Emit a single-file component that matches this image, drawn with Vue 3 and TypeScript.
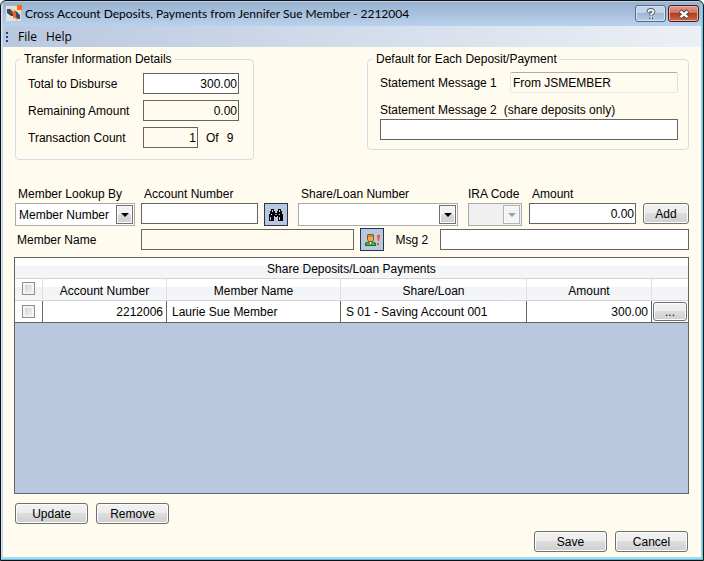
<script setup lang="ts">
import { ref } from 'vue'

interface Deposit {
  account: string
  member: string
  share: string
  amount: string
  selected: boolean
}

const title = 'Cross Account Deposits, Payments from Jennifer Sue Member - 2212004'
const total = ref('300.00')
const remaining = ref('0.00')
const count = ref('1')
const message1 = ref('From JSMEMBER')
const message2 = ref('')
const lookupBy = ref('Member Number')
const accountNumber = ref('')
const shareLoan = ref('')
const iraCode = ref('')
const amount = ref('0.00')
const memberName = ref('')
const msg2 = ref('')
const allSelected = ref(false)
const deposits = ref<Deposit[]>([
  {
    account: '2212006',
    member: 'Laurie Sue Member',
    share: 'S 01 - Saving Account 001',
    amount: '300.00',
    selected: false,
  },
])

function toggleAll() {
  deposits.value.forEach((d) => (d.selected = allSelected.value))
}
</script>

<template>
  <div class="window">
    <header class="titlebar">
      <svg class="app-icon" viewBox="0 0 16 16" aria-hidden="true">
        <rect y="1" width="15" height="15" fill="#e4e2e0" />
        <path d="M1 4h3l3 3v4H5L1 8z" fill="#3f4a56" />
        <path d="M8 6h2l4 4v4h-2L8 11z" fill="#3f4a56" />
        <path d="M4 3l4 4V4l2 4v4l2 4-4-4-1 2V9z" fill="#f0661e" />
        <rect x="11" y="0" width="5" height="5" fill="#ff6a13" />
      </svg>
      <h1>{{ title }}</h1>
      <button type="button" class="caption-btn" aria-label="Context help">
        <svg viewBox="0 0 12 12" width="12" height="12">
          <path d="M3.5 4.5V3.2Q3.8 1.8 6 1.8T8.5 3.8Q8.5 5 6.2 6.2V7.6M6.2 9v2" fill="none" stroke="#4b5665" stroke-width="3.6" />
          <path d="M3.5 4V3.2Q3.8 1.8 6 1.8T8.5 3.8Q8.5 5 6.2 6.2V7.3M6.2 9v1.600" fill="none" stroke="#fff" stroke-width="1.8" />
        </svg>
      </button>
      <button type="button" class="caption-btn close" aria-label="Close">
        <svg viewBox="0 0 12 12" width="12" height="12">
          <path d="M2 3l8 6.500M10 3l-8 6.500" stroke="#53464f" stroke-width="4.400" />
          <path d="M2.500 3.400l7 5.700M9.500 3.400l-7 5.700" stroke="#fff" stroke-width="2.400" />
        </svg>
      </button>
    </header>

    <nav class="menubar">
      <span class="grip"><i></i><i></i><i></i></span>
      <button type="button">File</button>
      <button type="button">Help</button>
    </nav>

    <main class="client">
      <section class="groups">
        <fieldset class="details">
          <legend>Transfer Information Details</legend>
          <div class="detail-row">
            <label for="total">Total to Disburse</label>
            <input id="total" v-model="total" class="box num" />
          </div>
          <div class="detail-row">
            <label for="remaining">Remaining Amount</label>
            <input id="remaining" v-model="remaining" class="box num locked" readonly />
          </div>
          <div class="detail-row">
            <label for="count">Transaction Count</label>
            <input id="count" v-model="count" class="box num locked short" readonly />
            <span class="limit">Of</span><span class="limit">9</span>
          </div>
        </fieldset>

        <fieldset class="defaults">
          <legend>Default for Each Deposit/Payment</legend>
          <div class="message-row">
            <label for="message1">Statement Message 1</label>
            <input id="message1" v-model="message1" class="box soft" readonly />
          </div>
          <label class="message-label" for="message2">
            <span>Statement Message 2</span><span>(share deposits only)</span>
          </label>
          <input id="message2" v-model="message2" class="box" />
        </fieldset>
      </section>

      <section class="lookup">
        <div class="cluster">
          <div class="field w-lookup">
            <label for="lookup">Member Lookup By</label>
            <div class="combo">
              <select id="lookup" v-model="lookupBy">
                <option>Member Number</option>
              </select>
              <span class="drop"></span>
            </div>
          </div>
          <div class="field w-account">
            <label for="account">Account Number</label>
            <input id="account" v-model="accountNumber" class="box" />
          </div>
          <button type="button" class="icon-btn" aria-label="Find account">
            <svg viewBox="0 0 16 14" width="16" height="14">
              <path d="M3 1h3v2h1v2h2V3h1V1h3v2h1v3h1v7h-5V8H9v1H7V8H6v5H1V6h1V3h1z" fill="#050505" />
              <path d="M4 2h1v2H4zM11 2h1v2h-1zM3 6h1v1H3zM11 6h1v1h-1zM2 9h1v3H2zM11 9h1v3h-1z" fill="#c9ced4" />
              <path d="M7 6h2v1H7z" fill="#8b9095" />
            </svg>
          </button>
        </div>

        <div class="field grow">
          <label for="share">Share/Loan Number</label>
          <div class="combo">
            <select id="share" v-model="shareLoan"><option value=""></option></select>
            <span class="drop"></span>
          </div>
        </div>

        <div class="cluster wide">
          <div class="field w-ira">
            <label for="ira" class="flush">IRA Code</label>
            <div class="combo disabled">
              <select id="ira" v-model="iraCode" disabled><option value=""></option></select>
              <span class="drop"></span>
            </div>
          </div>
          <div class="field w-amount">
            <label for="amount">Amount</label>
            <input id="amount" v-model="amount" class="box num" />
          </div>
          <button type="button" class="btn add">Add</button>
        </div>
      </section>

      <section class="member">
        <label for="member" class="member-label">Member Name</label>
        <input id="member" v-model="memberName" class="box locked member-box" readonly />
        <button type="button" class="icon-btn" aria-label="Member alerts">
          <svg viewBox="0 0 16 14" width="16" height="14">
            <path d="M1 13v-3l2-1 2-1h3l2 1 2 1v3z" fill="#1f6b2c" />
            <path d="M2 12v-1l2-2 2 2h1l2-2 2 2v1z" fill="#4fae45" />
            <path d="M5 8h3l-1 3H6z" fill="#f6e3bd" />
            <path d="M3 2l1-1h5l1 1v5L8 9H5L3 7z" fill="#8a5a1c" />
            <path d="M4 4h5v3L8 8H5L4 7z" fill="#f0a952" />
            <path d="M4 2h5v2H4z" fill="#c98a2e" />
            <path d="M13 2h3l-1 6h-1zM13 10h2v2h-2z" fill="#ff4a0b" />
          </svg>
        </button>
        <label for="msg2" class="msg-label">Msg 2</label>
        <input id="msg2" v-model="msg2" class="box msg-box" />
      </section>

      <section class="grid">
        <table>
          <colgroup>
            <col class="c-check" /><col class="c-account" /><col class="c-member" />
            <col /><col class="c-amount" /><col class="c-more" />
          </colgroup>
          <thead>
            <tr class="band"><th colspan="6">Share Deposits/Loan Payments</th></tr>
            <tr class="heads">
              <th class="check">
                <input v-model="allSelected" type="checkbox" aria-label="Select all" @change="toggleAll" />
              </th>
              <th>Account Number</th>
              <th>Member Name</th>
              <th>Share/Loan</th>
              <th>Amount</th>
              <th></th>
            </tr>
          </thead>
          <tbody>
            <tr v-for="d in deposits" :key="d.account">
              <td class="check"><input v-model="d.selected" type="checkbox" aria-label="Select row" /></td>
              <td class="right">{{ d.account }}</td>
              <td>{{ d.member }}</td>
              <td>{{ d.share }}</td>
              <td class="right">{{ d.amount }}</td>
              <td class="more"><button type="button" class="btn">...</button></td>
            </tr>
          </tbody>
        </table>
      </section>

      <footer>
        <div class="actions">
          <button type="button" class="btn">Update</button>
          <button type="button" class="btn">Remove</button>
        </div>
        <div class="actions end">
          <button type="button" class="btn">Save</button>
          <button type="button" class="btn">Cancel</button>
        </div>
      </footer>
    </main>
  </div>
</template>

<style>
body {
  background: #fff;
}
</style>

<style scoped>
* {
  box-sizing: border-box;
}
.window {
  display: flex;
  flex-direction: column;
  min-height: 100vh;
  padding: 1px 2px 3px;
  border: 1px solid #111;
  border-radius: 6px 6px 0 0;
  background: linear-gradient(90deg, #dceafa, #b9d1ea 2px, #b9d1ea calc(100% - 2px), #35cdea);
  box-shadow: inset 0 -1px #35cdea;
  font: 12px/14px 'Liberation Sans', Arial, sans-serif;
  color: #000;
}
button,
input,
select {
  font: inherit;
  color: inherit;
  margin: 0;
}
.titlebar {
  display: flex;
  align-items: flex-start;
  height: 24px;
  padding: 3px 2px 0 3px;
  background: linear-gradient(#98b1cf, #b9d1ec);
}
.app-icon {
  width: 16px;
  height: 16px;
  flex: none;
}
h1 {
  flex: 1;
  margin: 0 0 0 3px;
  font: 12px/18px Lato, 'Open Sans', sans-serif;
  white-space: nowrap;
}
.caption-btn {
  display: flex;
  align-items: center;
  justify-content: center;
  width: 31px;
  height: 17px;
  margin-left: 2px;
  padding: 0;
  border: 1px solid #56697f;
  border-radius: 3px;
  background: linear-gradient(#c3d4e8 50%, #9fb7d2 50%, #b9d0e9);
  box-shadow: inset 0 0 0 1px #d6e4f3;
}
.caption-btn.close {
  border-color: #4a1c22;
  background: linear-gradient(#e09c8c, #d0705b 50%, #b93a22 50%, #cf6b48);
  box-shadow: inset 0 0 0 1px #e8aea2;
}
.menubar {
  display: flex;
  align-items: center;
  height: 21px;
  padding-left: 3px;
  background: linear-gradient(90deg, #b8c8df, #ecf0f6);
  font: 12px/20px 'Open Sans', 'Noto Sans', sans-serif;
}
.menubar button {
  margin-right: 9px;
  padding: 0;
  border: 0;
  background: none;
}
.grip {
  display: flex;
  flex-direction: column;
  gap: 2px;
  margin-right: 10px;
}
.grip i {
  width: 2px;
  height: 2px;
  background: #27416b;
}
.client {
  flex: 1;
  display: flex;
  flex-direction: column;
  padding: 5px 12px 5px 11px;
  background: #fffbef;
}
.groups {
  display: flex;
  align-items: flex-start;
  justify-content: space-between;
  padding-left: 1px;
}
fieldset {
  margin: 0;
  border: 1px solid #d3dde6;
  border-radius: 4px;
}
legend {
  margin-left: -7px;
  padding: 0 3px;
}
.details {
  width: 239px;
  height: 108px;
  padding: 7px 0 0 12px;
}
.detail-row {
  display: flex;
  align-items: center;
  height: 21px;
  margin-bottom: 6px;
}
.detail-row label {
  width: 115px;
}
.detail-row .box {
  width: 96px;
}
.detail-row .short {
  width: 55px;
}
.limit {
  margin-left: 8px;
}
.defaults {
  width: 322px;
  height: 98px;
  padding: 6px 10px 0 12px;
}
.message-row {
  display: flex;
  align-items: center;
  margin-bottom: 10px;
}
.message-row label {
  width: 130px;
  flex: none;
}
.message-label {
  display: flex;
  gap: 7px;
  margin-bottom: 2px;
}
.box {
  display: block;
  width: 100%;
  min-width: 0;
  height: 21px;
  padding: 0 2px;
  border: 1px solid #646464;
  border-radius: 0;
  background: #fff;
  outline-offset: -1px;
}
.num {
  padding: 0 1px;
  text-align: right;
}
.locked {
  background: #fffbef;
}
.soft {
  border-color: #abadb3 #dbdfe6 #e3e9ef #e2e3ea;
  border-radius: 2px;
  background: #fffbef;
}
.lookup {
  display: flex;
  align-items: flex-start;
  gap: 10px;
  margin-top: 27px;
  padding-left: 1px;
}
.cluster {
  display: flex;
  gap: 6px;
}
.wide {
  gap: 7px;
}
.field label {
  display: block;
  height: 16px;
  padding-left: 3px;
  white-space: nowrap;
}
.field .flush {
  padding-left: 0;
}
.w-lookup {
  width: 120px;
}
.w-account {
  width: 117px;
}
.w-ira {
  width: 54px;
}
.w-amount {
  width: 107px;
}
.grow {
  flex: 1;
}
.combo {
  display: grid;
  height: 23px;
  border: 1px solid #ababab;
  background: #fff;
}
.combo select,
.drop {
  grid-area: 1 / 1;
}
.combo select {
  width: 100%;
  padding: 0 20px 0 3px;
  border: 0;
  border-radius: 0;
  background: none;
  appearance: none;
}
.drop {
  display: flex;
  align-items: center;
  justify-content: center;
  justify-self: end;
  width: 17px;
  margin: 1px;
  border: 1px solid #707070;
  background: linear-gradient(#f2f2f2 45%, #d8d8d8 55%, #cfcfcf);
  box-shadow: inset 0 0 0 1px #fafafa;
  pointer-events: none;
}
.drop::after {
  content: '';
  border: 4px solid transparent;
  border-top-color: #000;
  border-bottom: 0;
}
.disabled {
  background: #f0f0f0;
}
.disabled .drop {
  border-color: #adb2b5;
  background: #f4f4f4;
}
.disabled .drop::after {
  border-top-color: #a0a0a0;
}
.icon-btn {
  display: flex;
  align-items: center;
  justify-content: center;
  flex: none;
  width: 24px;
  height: 23px;
  padding: 0;
  border: 1px solid #26364f;
  background: #b8c8df;
}
.lookup .icon-btn,
.add {
  margin-top: 16px;
}
.btn {
  width: 73px;
  height: 21px;
  padding: 0;
  border: 1px solid #707070;
  border-radius: 3px;
  background: linear-gradient(#f2f2f2 0, #ebebeb 50%, #dddddd 50%, #cfcfcf);
  box-shadow: inset 0 0 0 1px #fbfbfb;
}
.btn.add {
  width: 46px;
}
.member {
  display: flex;
  align-items: center;
  margin-top: 2px;
  padding-left: 3px;
}
.member-label {
  width: 124px;
  flex: none;
}
.member-box {
  flex: 213;
  margin-right: 6px;
}
.msg-label {
  width: 56px;
  flex: none;
  padding-left: 11px;
  white-space: nowrap;
}
.msg-box {
  flex: 249;
}
.grid {
  flex: 1;
  margin-top: 6px;
  border: 1px solid #646464;
  background: #b8c8df;
}
table {
  width: 100%;
  table-layout: fixed;
  border-collapse: separate;
  border-spacing: 0;
}
.c-check {
  width: 28px;
}
.c-account {
  width: 124px;
}
.c-member {
  width: 174px;
}
.c-amount {
  width: 125px;
}
.c-more {
  width: 36px;
}
th {
  height: 22px;
  padding: 3px 0 0;
  border-right: 1px solid #e0e1e3;
  border-bottom: 1px solid #d5d5d5;
  background: linear-gradient(#fff 40%, #f2f3f6 40%, #f5f6f8);
  font-weight: normal;
}
.band th {
  height: 21px;
  padding: 2px 0 0;
}
td {
  height: 22px;
  padding: 0 2px 0 5px;
  border-right: 1px solid #646464;
  border-bottom: 1px solid #646464;
  background: #fff;
  white-space: nowrap;
}
th:last-child,
td:last-child {
  border-right: 0;
}
.right {
  text-align: right;
}
td.right {
  padding-right: 3px;
}
.check {
  padding: 0;
  text-align: center;
}
.check input {
  display: block;
  width: 13px;
  height: 13px;
  margin: 0 auto;
  border: 1px solid #8e8f8f;
  background: linear-gradient(135deg, #cbcfd5, #f6f6f6);
  box-shadow: inset 0 0 0 2px #f4f4f4;
  appearance: none;
}
.check input:checked {
  background: #27416b;
}
th.check {
  padding: 0 0 3px;
}
td.more {
  padding: 0 1px;
}
.more .btn {
  display: block;
  width: 100%;
  height: 19px;
}
.actions {
  display: flex;
  gap: 8px;
  margin-top: 9px;
  padding-left: 1px;
}
.end {
  justify-content: flex-end;
  margin-top: 7px;
  padding-right: 1px;
}
</style>
